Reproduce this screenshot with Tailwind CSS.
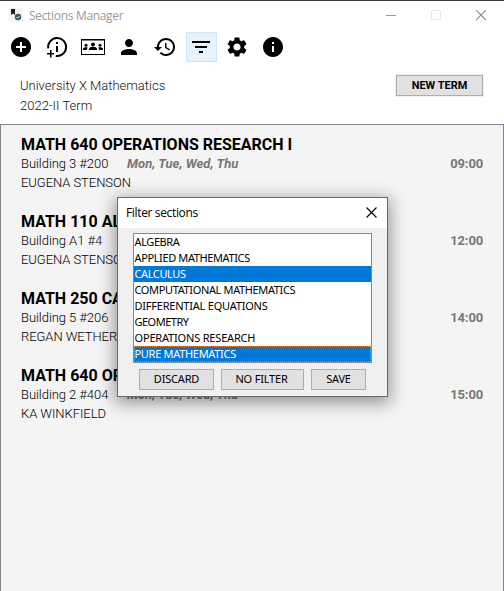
<!DOCTYPE html>
<html lang="en">
<head>
<meta charset="utf-8">
<title>Sections Manager</title>
<script src="https://cdn.jsdelivr.net/npm/@tailwindcss/browser@4"></script>
</head>
<body class="w-[504px] h-[591px] overflow-hidden bg-white relative text-black font-[Roboto,sans-serif]">
<div class="h-[591px] flex flex-col border-t border-[#3a3a3a]">
  <header class="h-[30px] shrink-0 flex items-start">
    <svg class="ml-[9px] mt-[7px]" width="14" height="14" viewBox="0 0 14 14"><path fill="#f3f3f3" d="M0 0h14v14H0z"/><path fill="#1c1c20" d="M2 1h4v6L4 5.5 2 7z"/><circle cx="9" cy="9" r="3.2" fill="#3d5563"/><path d="M7.5 9l1.2 1.2 2-2.3" stroke="#fff" fill="none" stroke-width=".9"/></svg>
    <h1 class="ml-[6px] mt-[6px] text-[12px] leading-[17px] text-[#999] font-['Open_Sans',sans-serif] tracking-[-0.32px]">Sections Manager</h1>
    <div class="ml-auto mr-[18px] mt-[9px] flex gap-[35px]">
      <svg width="10" height="11"><path d="M0 5.500h10" stroke="#999"/></svg>
      <svg width="10" height="11"><path d="M.5.5h9v9h-9z" fill="none" stroke="#e6e6e6"/></svg>
      <svg width="10" height="11"><path d="M0 0l10 10M10 0L0 10" stroke="#888" stroke-width="1.1"/></svg>
    </div>
  </header>
  <nav class="h-[32px] shrink-0 flex items-center pl-[6px] gap-[5px]">
    <button class="w-[31px] h-[30px] flex items-center pl-[3px]"><svg width="24" height="24" viewBox="0 0 24 24"><path d="M12 2C6.480 2 2 6.480 2 12s4.480 10 10 10 10-4.480 10-10S17.520 2 12 2zm5 11h-4v4h-2v-4H7v-2h4V7h2v4h4v2z"/></svg></button>
    <button class="w-[31px] h-[30px] flex items-center pl-[3px]"><svg width="24" height="24" viewBox="0 0 24 24"><path d="M3.200 13.300A9 9 0 1 1 10.800 20.900" fill="none" stroke="#000" stroke-width="2"/><path d="M11 7h2v2h-2zM11 11h2v6h-2zM5 15h1.500v3H9v1.500H6.500v3H5v-3H2V18h3z"/></svg></button>
    <button class="w-[31px] h-[30px] flex items-center pl-[3px]"><svg width="24" height="24" viewBox="0 0 24 24"><path d="M0 4v16h24V4H0zm23 15H1V5.500h22V19z"/><circle cx="12" cy="9.600" r="2"/><path d="M8 15v-.8c0-1.600 2-2.400 4-2.400s4 .8 4 2.400V15z"/><circle cx="5" cy="10.300" r="1.500"/><circle cx="19" cy="10.300" r="1.500"/><path d="M2 15v-1c0-1.100 1.400-1.700 3-1.700.7 0 1.300.1 1.800.4-.6.600-.8 1.100-.8 2.300zM22 15v-1c0-1.100-1.400-1.700-3-1.700-.7 0-1.300.1-1.800.4.6.600.8 1.100.8 2.300z"/></svg></button>
    <button class="w-[31px] h-[30px] flex items-center pl-[3px]"><svg width="24" height="24" viewBox="0 0 24 24"><path d="M12 12c2.210 0 4-1.790 4-4s-1.790-4-4-4-4 1.790-4 4 1.790 4 4 4zm0 2c-2.670 0-8 1.340-8 4v2h16v-2c0-2.660-5.330-4-8-4z"/></svg></button>
    <button class="w-[31px] h-[30px] flex items-center pl-[3px]"><svg width="24" height="24" viewBox="0 0 24 24"><path d="M13 3c-4.970 0-9 4.030-9 9H1l3.890 3.890.07.140L9 12H6c0-3.870 3.130-7 7-7s7 3.130 7 7-3.130 7-7 7c-1.930 0-3.680-.79-4.940-2.060l-1.420 1.420C8.270 19.990 10.510 21 13 21c4.970 0 9-4.030 9-9s-4.030-9-9-9zm-1 5v5l4.280 2.540.72-1.210-3.500-2.080V8H12z"/></svg></button>
    <button class="w-[31px] h-[30px] flex items-center pl-[2px] bg-[#e5f3ff] border border-[#cce8ff]"><svg width="24" height="24" viewBox="0 0 24 24"><path d="M10 18h4v-2h-4v2zM3 6v2h18V6H3zm3 7h12v-2H6v2z"/></svg></button>
    <button class="w-[31px] h-[30px] flex items-center pl-[3px]"><svg width="24" height="24" viewBox="0 0 24 24"><path d="M19.140 12.940c.04-.3.060-.61.060-.94 0-.32-.02-.64-.07-.94l2.030-1.580c.18-.14.230-.41.120-.61l-1.920-3.320c-.12-.22-.37-.29-.59-.22l-2.390.96c-.5-.38-1.030-.7-1.620-.94l-.36-2.540c-.04-.24-.24-.41-.48-.41h-3.840c-.24 0-.43.170-.47.410l-.36 2.540c-.59.240-1.130.570-1.620.94l-2.390-.96c-.22-.08-.47 0-.59.220L2.740 8.870c-.12.210-.08.470.12.610l2.030 1.580c-.05.300-.09.630-.09.940s.02.640.07.940l-2.030 1.580c-.18.140-.23.410-.12.610l1.920 3.320c.12.220.37.290.59.220l2.390-.96c.5.380 1.030.7 1.620.94l.36 2.540c.05.240.24.410.48.410h3.840c.24 0 .44-.17.470-.41l.36-2.540c.59-.24 1.130-.56 1.620-.94l2.390.96c.22.080.47 0 .59-.22l1.920-3.320c.12-.22.070-.47-.12-.61l-2.010-1.580zM12 15.600c-1.980 0-3.600-1.620-3.600-3.600s1.620-3.600 3.600-3.600 3.600 1.620 3.600 3.600-1.620 3.600-3.600 3.600z"/></svg></button>
    <button class="w-[31px] h-[30px] flex items-center pl-[3px]"><svg width="24" height="24" viewBox="0 0 24 24"><path d="M12 2C6.480 2 2 6.480 2 12s4.480 10 10 10 10-4.480 10-10S17.520 2 12 2zm1 15h-2v-6h2v6zm0-8h-2V7h2v2z"/></svg></button>
  </nav>
  <section class="h-[61px] shrink-0 flex justify-between pl-[20px] pr-[20px]">
    <div class="pt-[13px] text-[13px] leading-[20px] text-[#111] font-light"><p>University X Mathematics</p><p>2022-II Term</p></div>
    <button class="mt-[11px] w-[89px] h-[23px] bg-[#f0f0f0] p-px"><span class="flex items-center justify-center h-full pt-px border border-[#adadad] bg-[#e1e1e1] text-[11px] font-bold">NEW TERM</span></button>
  </section>
  <main class="flex-1 bg-[#f4f4f4] border border-b-0 border-[#828790] pl-[20px] pr-[20px] pt-[10px]">
    <article class="h-[77px]"><h2 class="text-[16px] leading-[19px] font-bold">MATH 640 OPERATIONS RESEARCH I</h2><div class="flex text-[13px] leading-[19px]"><span class="w-[106px] font-light tracking-[-0.06px]">Building 3 #200</span><span class="font-bold italic text-[#777]">Mon, Tue, Wed, Thu</span><span class="ml-auto font-bold text-[#777] tracking-[-0.15px]">09:00</span></div><p class="text-[13px] leading-[19px] font-light tracking-[-0.06px]">EUGENA STENSON</p></article>
    <article class="h-[77px]"><h2 class="text-[16px] leading-[19px] font-bold">MATH 110 AL</h2><div class="flex text-[13px] leading-[19px]"><span class="w-[106px] font-light tracking-[-0.06px]">Building A1 #4</span><span class="ml-auto font-bold text-[#777] tracking-[-0.15px]">12:00</span></div><p class="text-[13px] leading-[19px] font-light tracking-[-0.06px]">EUGENA STENSON</p></article>
    <article class="h-[77px]"><h2 class="text-[16px] leading-[19px] font-bold">MATH 250 CA</h2><div class="flex text-[13px] leading-[19px]"><span class="w-[106px] font-light tracking-[-0.06px]">Building 5 #206</span><span class="ml-auto font-bold text-[#777] tracking-[-0.15px]">14:00</span></div><p class="text-[13px] leading-[19px] font-light tracking-[-0.06px]">REGAN WETHERELL</p></article>
    <article class="h-[77px]"><h2 class="text-[16px] leading-[19px] font-bold">MATH 640 OP</h2><div class="flex text-[13px] leading-[19px]"><span class="w-[106px] font-light tracking-[-0.06px]">Building 2 #404</span><span class="font-bold italic text-[#777]">Mon, Tue, Wed, Thu</span><span class="ml-auto font-bold text-[#777] tracking-[-0.15px]">15:00</span></div><p class="text-[13px] leading-[19px] font-light tracking-[-0.06px]">KA WINKFIELD</p></article>
  </main>
</div>
<div class="absolute left-[117px] top-[197px] w-[271px] h-[200px] border border-[#696969] bg-[#f0f0f0] shadow-[0_4px_16px_2px_rgba(0,0,0,0.4)] flex flex-col">
  <div class="h-[30px] shrink-0 bg-white flex items-center justify-between pl-[8px] pr-[10px]"><h2 class="text-[12px] leading-[16px] font-['Open_Sans',sans-serif] tracking-[-0.35px]">Filter sections</h2><svg class="-mt-[2px]" width="11" height="11"><path d="M.5.5l10 10M10.500 .5l-10 10" stroke="#000" stroke-width="1.1"/></svg></div>
  <ul class="mt-[5px] mx-[15px] w-[239px] h-[130px] shrink-0 border border-[#828790] bg-white font-['Noto_Sans',sans-serif] text-[11px] leading-[16px] whitespace-nowrap">
    <li class="h-[16px] pl-[0.5px]"><span class="tracking-[-0.4px]">ALGEBRA</span></li>
    <li class="h-[16px] pl-[0.5px]"><span class="tracking-[-0.38px]">APPLIED MATHEMATICS</span></li>
    <li class="h-[16px] pl-[0.5px] bg-[#0078d7] text-white"><span class="tracking-[-0.4px]">CALCULUS</span></li>
    <li class="h-[16px] pl-[0.5px]"><span class="tracking-[-0.36px]">COMPUTATIONAL MATHEMATICS</span></li>
    <li class="h-[16px] pl-[0.5px]"><span class="tracking-[-0.22px]">DIFFERENTIAL EQUATIONS</span></li>
    <li class="h-[16px] pl-[0.5px]"><span class="tracking-[-0.5px]">GEOMETRY</span></li>
    <li class="h-[16px] pl-[0.5px]"><span class="tracking-[-0.18px]">OPERATIONS RESEARCH</span></li>
    <li class="h-[16px] leading-[14px] bg-[#0078d7] text-white border border-dotted border-[#ff8728]"><span class="-ml-[0.5px] tracking-[-0.3px]">PURE MATHEMATICS</span></li>
  </ul>
  <div class="mt-[6px] ml-[21px] flex gap-[7px] font-['Noto_Sans',sans-serif] text-[11px] leading-[16px] tracking-[-0.2px]">
    <button class="w-[75px] h-[21px] pb-px flex items-center justify-center border border-[#adadad] bg-[#e1e1e1]">DISCARD</button>
    <button class="w-[83px] h-[21px] pb-px pr-[2px] flex items-center justify-center border border-[#adadad] bg-[#e1e1e1]">NO FILTER</button>
    <button class="w-[55px] h-[21px] pb-px flex items-center justify-center border border-[#adadad] bg-[#e1e1e1]">SAVE</button>
  </div>
</div>
</body>
</html>
